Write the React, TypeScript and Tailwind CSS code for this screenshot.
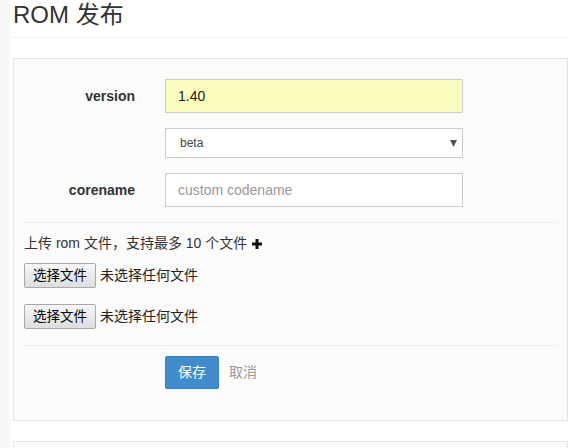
import { useState } from 'react'

const font = "font-['Liberation_Sans','Noto_Sans_CJK_SC',sans-serif]"

function PlusIcon() {
  return (
    <svg width="10" height="10" viewBox="0 0 10 10" className="inline-block ml-[5px] align-[-1px]">
      <rect x="3.5" y="0" width="3" height="10" fill="#111" />
      <rect x="0" y="3.5" width="10" height="3" fill="#111" />
    </svg>
  )
}

function FileRow() {
  return (
    <div className="flex items-center h-[25px]">
      <button
        type="button"
        className="h-[25px] w-[72px] border border-[#a9a9a9] rounded-[2px] bg-gradient-to-b from-[#f6f6f6] to-[#dedede] text-[13.5px] text-black leading-none"
      >
        选择文件
      </button>
      <span className="ml-[4px] text-[14px] text-[#222]">未选择任何文件</span>
    </div>
  )
}

export default function App() {
  const [version, setVersion] = useState('1.40')
  const [channel, setChannel] = useState('beta')
  const [codename, setCodename] = useState('')

  return (
    <div className={`min-h-screen flex bg-white text-[#333] ${font}`}>
      <div className="w-[10px] shrink-0 bg-[#f8f8f8]" />
      <div className="flex-1 pl-[3px] pr-[7px]">
        <h3 className="mt-[1px] pb-[9px] border-b border-[#eee] text-[24px] leading-[27px] font-normal text-[#333]">
          ROM 发布
        </h3>

        <div className="mt-[20px] border border-[#e3e3e3] bg-[#fbfbfb] px-[10px] pt-[20px] pb-[31px]">
          <div className="flex flex-col gap-[15px]">
            <div className="flex items-center">
              <label className="w-[111px] text-right text-[14px] font-bold">version</label>
              <input
                value={version}
                onChange={(e) => setVersion(e.target.value)}
                className="ml-[30px] w-[298px] h-[34px] px-[12px] border border-[#ccc] bg-[#fafdbd] text-[14px] text-[#222] outline-none"
              />
            </div>
            <div className="flex items-center">
              <div className="w-[111px]" />
              <div className="relative ml-[30px] w-[298px] h-[30px]">
                <select
                  value={channel}
                  onChange={(e) => setChannel(e.target.value)}
                  className="appearance-none w-full h-full pl-[14px] border border-[#ccc] bg-white text-[12px] text-[#444] outline-none"
                >
                  <option value="beta">beta</option>
                  <option value="stable">stable</option>
                </select>
                <svg width="7" height="7" viewBox="0 0 7 7" className="absolute right-[6px] top-[12px] pointer-events-none">
                  <polygon points="0,0 7,0 3.5,7" fill="#555" />
                </svg>
              </div>
            </div>
            <div className="flex items-center">
              <label className="w-[111px] text-right text-[14px] font-bold">corename</label>
              <input
                value={codename}
                onChange={(e) => setCodename(e.target.value)}
                placeholder="custom codename"
                className="ml-[30px] w-[298px] h-[34px] px-[12px] border border-[#ccc] bg-white text-[14px] placeholder:text-[#999] outline-none"
              />
            </div>
          </div>

          <hr className="mt-[15px] border-t border-[#eee]" />

          <p className="mt-[10px] text-[14px] leading-[20px] text-[#333]">
            上传 rom 文件，支持最多 10 个文件
            <PlusIcon />
          </p>

          <div className="mt-[10px] flex flex-col gap-[16px]">
            <FileRow />
            <FileRow />
          </div>

          <hr className="mt-[16px] border-t border-[#eee]" />

          <div className="mt-[10px] flex items-center pl-[141px]">
            <button
              type="button"
              className="h-[33px] px-[12px] border border-[#357ebd] bg-[#428bca] text-white text-[14px] rounded-[2px]"
            >
              保存
            </button>
            <button type="button" className="ml-[10px] text-[14px] text-[#999]">
              取消
            </button>
          </div>
        </div>

        <div className="mt-[20px] h-[40px] border border-[#e3e3e3] bg-[#fbfbfb]" />
      </div>
    </div>
  )
}
